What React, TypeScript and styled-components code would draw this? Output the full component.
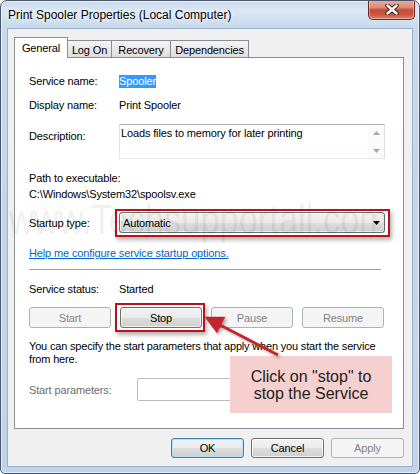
import React from "react";
import styled, { createGlobalStyle } from "styled-components";

const Global = createGlobalStyle`
  html, body { margin: 0; padding: 0; background: #ffffff; }
  body {
    width: 420px; height: 474px; overflow: hidden;
    font-family: "Liberation Sans", Arial, sans-serif;
    font-size: 11px; letter-spacing: -0.14px; color: #000;
  }
  * { box-sizing: border-box; }
`;

const Window = styled.div`
  position: relative;
  width: 420px;
  height: 474px;
  border: 1px solid #4a5668;
  border-radius: 7px 7px 5px 5px;
  background: linear-gradient(180deg, #c9dbee 0%, #dbe7f4 10px, #c6d9ed 27px, #bfd4eb 100%);
  box-shadow: inset 0 0 0 1px rgba(255, 255, 255, 0.6);
  display: flex;
  flex-direction: column;
  overflow: hidden;
`;

const TitleBar = styled.div`
  position: relative;
  height: 27px;
  flex-shrink: 0;
  display: flex;
  align-items: center;
  padding-left: 7px;
  font-size: 12px;
  letter-spacing: 0;
  color: #000;
  text-shadow: 0 0 6px #ffffff, 0 0 3px #ffffff;
`;

const CloseButton = styled.div`
  position: absolute;
  top: -1px;
  right: 4px;
  width: 47px;
  height: 20px;
  border: 1px solid #6b2a22;
  border-top: none;
  border-radius: 0 0 5px 5px;
  background: linear-gradient(180deg, #eab0a3 0%, #dc8a78 40%, #c64a35 52%, #cc5a43 78%, #dc8068 100%);
  box-shadow: inset 0 0 0 1px rgba(255, 255, 255, 0.35);
  display: flex;
  align-items: center;
  justify-content: center;
`;

const Client = styled.div`
  flex: 1;
  margin: 0 6px 6px 6px;
  background: #f0f0f0;
  border: 1px solid #9cb0c8;
  padding: 8px 8px 8px 6px;
  display: flex;
  flex-direction: column;
`;

const TabStrip = styled.div`
  display: flex;
  align-items: flex-end;
  height: 20px;
  flex-shrink: 0;
`;

const Tab = styled.div<{ $w: number; $active?: boolean }>`
  position: relative;
  z-index: ${(p) => (p.$active ? 2 : 1)};
  width: ${(p) => p.$w}px;
  height: ${(p) => (p.$active ? 21 : 17)}px;
  margin-bottom: ${(p) => (p.$active ? -1 : 0)}px;
  margin-left: -1px;
  &:first-child { margin-left: 0; }
  border: 1px solid #898c95;
  border-bottom: none;
  background: ${(p) => (p.$active ? "#ffffff" : "linear-gradient(180deg, #f4f4f4 0%, #e9e9e9 50%, #dedede 100%)")};
  display: flex;
  align-items: center;
  justify-content: center;
  padding-top: ${(p) => (p.$active ? 0 : 1)}px;
`;

const Panel = styled.div`
  flex: 1;
  background: #ffffff;
  border: 1px solid #898c95;
  padding: 15px 17px 0 14px;
  display: flex;
  flex-direction: column;
`;

const Row = styled.div<{ $mt?: number; $align?: string }>`
  display: flex;
  align-items: ${(p) => p.$align || "center"};
  margin-top: ${(p) => p.$mt || 0}px;
  line-height: 16px;
`;

const Label = styled.div<{ $w?: number; $pt?: number; $disabled?: boolean }>`
  width: ${(p) => p.$w || 90}px;
  flex-shrink: 0;
  padding-top: ${(p) => p.$pt || 0}px;
  color: ${(p) => (p.$disabled ? "#6d6d6d" : "#000")};
`;

const Selected = styled.span`
  display: inline-block;
  line-height: 13px;
  background: #3399ff;
  color: #ffffff;
`;

const Line = styled.div<{ $mt?: number }>`
  margin-top: ${(p) => p.$mt || 0}px;
  line-height: 16px;
`;

const DescBox = styled.div`
  width: 266px;
  height: 35px;
  border: 1px solid;
  border-color: #abadb3 #dbdfe6 #e3e9ef #e2e3ea;
  display: flex;
`;

const DescText = styled.div`
  flex: 1;
  padding: 0 1px;
  line-height: 16px;
`;

const ScrollBar = styled.div`
  width: 16px;
  display: flex;
  flex-direction: column;
  align-items: center;
  justify-content: space-between;
  padding: 6px 0 5px;
  background: #fbfbfb;
`;

const Highlight = styled.div<{ $inset: string }>`
  position: relative;
  display: inline-flex;
  &::after {
    content: "";
    position: absolute;
    inset: ${(p) => p.$inset};
    border: 2px solid #b5141c;
    box-shadow: 2px 3px 4px rgba(0, 0, 0, 0.3);
    pointer-events: none;
  }
`;

const Combo = styled.div`
  width: 266px;
  height: 21px;
  border: 1px solid #707070;
  border-radius: 3px;
  background: linear-gradient(180deg, #f2f2f2 0%, #ebebeb 50%, #dddddd 51%, #cfcfcf 100%);
  box-shadow: inset 0 0 0 1px rgba(255, 255, 255, 0.6);
  display: flex;
  align-items: center;
  justify-content: space-between;
  padding: 0 4px 0 3px;
`;

const Link = styled.a<{ $mt?: number }>`
  display: block;
  margin-top: ${(p) => p.$mt || 0}px;
  color: #0066cc;
  text-decoration: underline;
  line-height: 16px;
`;

const Separator = styled.div<{ $mt?: number }>`
  width: 352px;
  margin-top: ${(p) => p.$mt || 0}px;
  border-top: 1px solid #a0a0a0;
`;

const ButtonRow = styled.div<{ $mt?: number; $gap: number; $end?: boolean }>`
  display: flex;
  gap: ${(p) => p.$gap}px;
  justify-content: ${(p) => (p.$end ? "flex-end" : "flex-start")};
  margin-top: ${(p) => p.$mt || 0}px;
  flex-shrink: 0;
`;

const Button = styled.div<{ $w: number; $h: number; $disabled?: boolean; $default?: boolean }>`
  width: ${(p) => p.$w}px;
  height: ${(p) => p.$h}px;
  border: 1px solid ${(p) => (p.$disabled ? "#adb2b5" : p.$default ? "#3c7fb1" : "#707070")};
  border-radius: 3px;
  background: ${(p) =>
    p.$disabled ? "#f4f4f4" : "linear-gradient(180deg, #f2f2f2 0%, #ebebeb 50%, #dddddd 51%, #cfcfcf 100%)"};
  box-shadow: ${(p) =>
    p.$disabled ? "none" : p.$default ? "inset 0 0 0 1px #b3e0f6" : "inset 0 0 0 1px rgba(255,255,255,0.7)"};
  color: ${(p) => (p.$disabled ? "#838383" : "#000")};
  display: flex;
  align-items: center;
  justify-content: center;
`;

const Paragraph = styled.div<{ $mt?: number }>`
  margin-top: ${(p) => p.$mt || 0}px;
  line-height: 13px;
  letter-spacing: -0.18px;
`;

const Input = styled.div`
  width: 248px;
  height: 23px;
  border: 1px solid #b9bcc1;
  border-radius: 2px;
  background: #ffffff;
`;

const Watermark = styled.div`
  position: absolute;
  left: 8px;
  top: 198px;
  font-size: 42px;
  line-height: 42px;
  letter-spacing: 0;
  white-space: nowrap;
  color: rgba(0, 0, 0, 0.06);
  transform: scaleX(0.82);
  transform-origin: left top;
  pointer-events: none;
  z-index: 5;
`;

const Callout = styled.div`
  position: absolute;
  left: 229px;
  top: 355px;
  width: 162px;
  height: 57px;
  background: #f6cfcf;
  display: flex;
  flex-direction: column;
  align-items: center;
  justify-content: center;
  font-size: 16px;
  line-height: 17px;
  letter-spacing: 0;
  color: #222222;
  z-index: 6;
`;

const ArrowLayer = styled.svg`
  position: absolute;
  left: -1px;
  top: -1px;
  pointer-events: none;
  z-index: 7;
`;

const Tri = ({ up }: { up?: boolean }) => (
  <svg width="7" height="4" viewBox="0 0 7 4">
    <path d={up ? "M0 4 L3.5 0 L7 4 Z" : "M0 0 L3.5 4 L7 0 Z"} fill="#a8a8a8" />
  </svg>
);

export default function App() {
  return (
    <>
      <Global />
      <Window>
        <TitleBar>
          Print Spooler Properties (Local Computer)
          <CloseButton>
            <svg width="14" height="11" viewBox="0 0 14 11">
              <path d="M2.5 1.5 L11.5 9.5 M11.5 1.5 L2.5 9.5" stroke="#3b1a15" strokeWidth="4.4" strokeLinecap="round" />
              <path d="M2.5 1.5 L11.5 9.5 M11.5 1.5 L2.5 9.5" stroke="#ffffff" strokeWidth="2.4" strokeLinecap="round" />
            </svg>
          </CloseButton>
        </TitleBar>
        <Client>
          <TabStrip>
            <Tab $w={54} $active>General</Tab>
            <Tab $w={45}>Log On</Tab>
            <Tab $w={60}>Recovery</Tab>
            <Tab $w={79}>Dependencies</Tab>
          </TabStrip>
          <Panel>
            <Row>
              <Label>Service name:</Label>
              <Selected>Spooler</Selected>
            </Row>
            <Row $mt={8}>
              <Label>Display name:</Label>
              <span>Print Spooler</span>
            </Row>
            <Row $mt={11} $align="flex-start">
              <Label $pt={4}>Description:</Label>
              <DescBox>
                <DescText>Loads files to memory for later printing</DescText>
                <ScrollBar>
                  <Tri up />
                  <Tri />
                </ScrollBar>
              </DescBox>
            </Row>
            <Line $mt={11}>Path to executable:</Line>
            <Line>C:\Windows\System32\spoolsv.exe</Line>
            <Row $mt={10}>
              <Label>Startup type:</Label>
              <Highlight $inset="-3px -5px -4px -4px">
                <Combo>
                  <span>Automatic</span>
                  <svg width="7" height="4" viewBox="0 0 7 4">
                    <path d="M0 0 L7 0 L3.5 4 Z" fill="#000" />
                  </svg>
                </Combo>
              </Highlight>
            </Row>
            <Link $mt={12}>Help me configure service startup options.</Link>
            <Separator $mt={8} />
            <Row $mt={11}>
              <Label>Service status:</Label>
              <span>Started</span>
            </Row>
            <ButtonRow $mt={10} $gap={9}>
              <Button $w={82} $h={21} $disabled>Start</Button>
              <Highlight $inset="-4px -3px -4px -5px">
                <Button $w={82} $h={21}>Stop</Button>
              </Highlight>
              <Button $w={82} $h={21} $disabled>Pause</Button>
              <Button $w={82} $h={21} $disabled>Resume</Button>
            </ButtonRow>
            <Paragraph $mt={12}>
              You can specify the start parameters that apply when you start the service
              <br />
              from here.
            </Paragraph>
            <Row $mt={12}>
              <Label $w={108} $disabled>Start parameters:</Label>
              <Input />
            </Row>
          </Panel>
          <ButtonRow $mt={9} $gap={7} $end>
            <Button $w={73} $h={20} $default>OK</Button>
            <Button $w={73} $h={20}>Cancel</Button>
            <Button $w={73} $h={20} $disabled>Apply</Button>
          </ButtonRow>
        </Client>
        <Watermark>www.Techsupportall.com</Watermark>
        <Callout>
          <div>Click on "stop" to</div>
          <div>stop the Service</div>
        </Callout>
        <ArrowLayer width="420" height="474" viewBox="0 0 420 474">
          <defs>
            <filter id="sh" x="-20%" y="-20%" width="140%" height="140%">
              <feDropShadow dx="2" dy="2" stdDeviation="1.5" floodColor="#000" floodOpacity="0.3" />
            </filter>
          </defs>
          <g filter="url(#sh)" fill="#c1272d" stroke="#c1272d">
            <line x1="278" y1="355" x2="220" y2="325" strokeWidth="3" />
            <polygon points="205,317 217,333 225,317" strokeWidth="0.5" />
          </g>
        </ArrowLayer>
      </Window>
    </>
  );
}
